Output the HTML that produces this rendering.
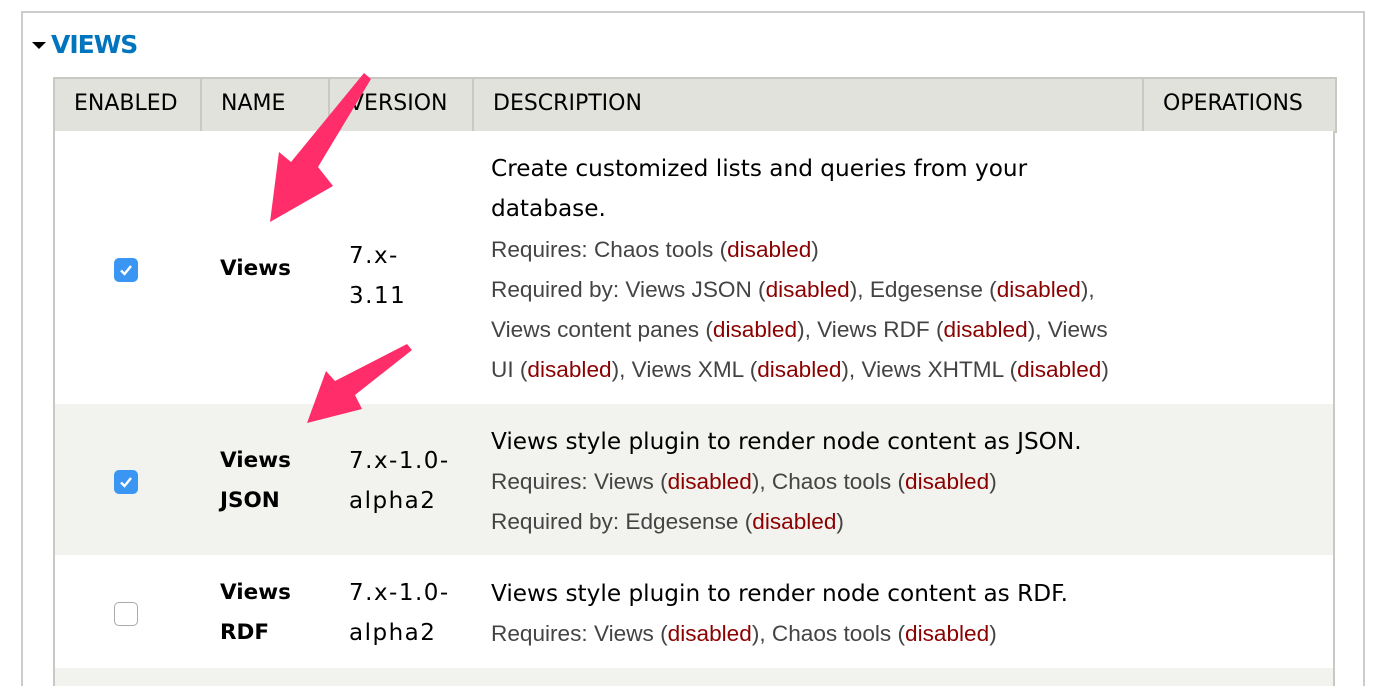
<!DOCTYPE html>
<html style="overflow:hidden;height:686px"><head><meta charset="utf-8"><style>
body{margin:0;width:1376px;height:686px;background:#fff;position:relative;overflow:hidden;font-family:"DejaVu Sans","Liberation Sans",sans-serif;color:#000}
.a{position:absolute;white-space:nowrap}
.fs{position:absolute;left:21px;top:11px;width:1340px;height:680px;border:2px solid #ccc;border-bottom:none}
.hd{position:absolute;left:53px;top:77px;width:1280px;height:52px;background:#e1e2dc;border:2px solid #c9c9c4}
.vl{position:absolute;top:77px;width:2px;height:54px;background:#c9c9c4}
.h{font-size:22px;top:91px}
.bd{position:absolute;left:53px;width:2px;background:#c9c9c4;top:131px;height:560px}
.bdr{position:absolute;left:1333px;width:2px;background:#c9c9c4;top:131px;height:560px}
.r{position:absolute;left:55px;width:1278px}
.t{font-size:23.2px}
.v{font-size:23px;letter-spacing:1.5px}
.s{font-family:"Liberation Sans",sans-serif;font-size:22.6px;color:#444}
.s b{font-weight:normal;color:#8b0000}
.n{font-weight:bold;font-size:21.5px}
.cb{position:absolute;left:114px;width:24px;height:24px;border-radius:5px;background:#3b95f2}
.cb svg{position:absolute;left:3px;top:3px}
.cb0{position:absolute;left:114px;width:24px;height:24px;border-radius:5px;background:#fff;border:1px solid #aaa;box-sizing:border-box}
</style></head><body>
<div class="fs"></div>
<svg class="a" style="left:31px;top:40px" width="18" height="12"><polygon points="1,2 15,2 8,9" fill="#000"/></svg>
<div class="a" style="left:51px;top:30px;font-size:25px;font-weight:bold;color:#0074bd;font-family:'DejaVu Sans',sans-serif;letter-spacing:-1px">VIEWS</div>
<div class="hd"></div>
<div class="vl" style="left:200px"></div><div class="vl" style="left:328px"></div><div class="vl" style="left:472px"></div><div class="vl" style="left:1142px"></div>
<div class="a h" style="left:74px">ENABLED</div>
<div class="a h" style="left:221px">NAME</div>
<div class="a h" style="left:349px">VERSION</div>
<div class="a h" style="left:493px">DESCRIPTION</div>
<div class="a h" style="left:1163px">OPERATIONS</div>
<div class="r" style="top:131px;height:273px;background:#fff"></div>
<div class="r" style="top:404px;height:151px;background:#f2f2ee"></div>
<div class="r" style="top:555px;height:113px;background:#fff"></div>
<div class="r" style="top:668px;height:30px;background:#f2f2ee"></div>
<div class="bd"></div><div class="bdr"></div>

<div class="cb" style="top:258px"><svg width="18" height="18"><path d="M4 9.5 L7.5 13 L14 5" stroke="#fff" stroke-width="2.4" fill="none"/></svg></div>
<div class="a n" style="left:220px;top:256px">Views</div>
<div class="a v" style="left:349px;top:236px;line-height:40px">7.x-<br>3.11</div>
<div class="a t" style="left:491px;top:149px;line-height:40px">Create customized lists and queries from your<br>database.</div>
<div class="a s" style="left:491px;top:230px;line-height:40px">Requires: Chaos tools (<b>disabled</b>)<br>Required by: Views JSON (<b>disabled</b>), Edgesense (<b>disabled</b>),<br>Views content panes (<b>disabled</b>), Views RDF (<b>disabled</b>), Views<br>UI (<b>disabled</b>), Views XML (<b>disabled</b>), Views XHTML (<b>disabled</b>)</div>

<div class="cb" style="top:470px"><svg width="18" height="18"><path d="M4 9.5 L7.5 13 L14 5" stroke="#fff" stroke-width="2.4" fill="none"/></svg></div>
<div class="a n" style="left:220px;top:441px;line-height:40px">Views<br>JSON</div>
<div class="a v" style="left:349px;top:441px;line-height:40px">7.x-1.0-<br>alpha2</div>
<div class="a t" style="left:491px;top:428px">Views style plugin to render node content as JSON.</div>
<div class="a s" style="left:491px;top:462px;line-height:40px">Requires: Views (<b>disabled</b>), Chaos tools (<b>disabled</b>)<br>Required by: Edgesense (<b>disabled</b>)</div>

<div class="cb0" style="top:602px"></div>
<div class="a n" style="left:220px;top:573px;line-height:40px">Views<br>RDF</div>
<div class="a v" style="left:349px;top:573px;line-height:40px">7.x-1.0-<br>alpha2</div>
<div class="a t" style="left:491px;top:580px">Views style plugin to render node content as RDF.</div>
<div class="a s" style="left:491px;top:614px;line-height:40px">Requires: Views (<b>disabled</b>), Chaos tools (<b>disabled</b>)</div>

<svg class="a" style="left:0;top:0" width="1376" height="686">
<polygon points="364,73 371,79 318,167 333,186 270,222 279,152 291,162" fill="#ff2d6a"/>
<polygon points="407,344 412,350 355,395 362,409 307,423 326,371 335,381" fill="#ff2d6a"/>
</svg>
</body></html>
